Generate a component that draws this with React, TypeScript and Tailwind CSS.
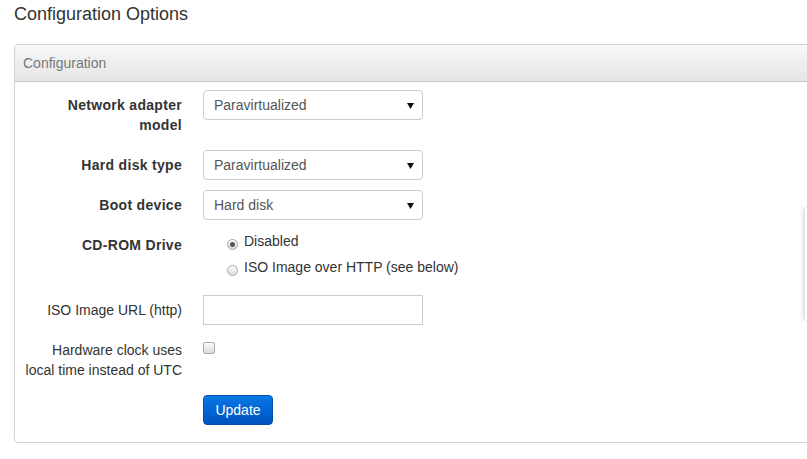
import React from "react";

const Arrow = () => (
  <svg width="7" height="6" viewBox="0 0 7 6" className="absolute right-[8px] top-[12px]">
    <polygon points="0,0 7,0 3.5,6" fill="#111" />
  </svg>
);

const Select = ({ value }: { value: string }) => (
  <div className="relative h-[30px] w-[220px] rounded-[4px] border border-[#cccccc] bg-white pl-[10px] text-[14px] leading-[28px] text-[#555]">
    {value}
    <Arrow />
  </div>
);

const Radio = ({ checked }: { checked?: boolean }) => (
  <span className="mt-[8px] flex h-[11px] w-[11px] shrink-0 items-center justify-center rounded-full border border-[#a8a8a8] bg-gradient-to-b from-[#fbfbfb] to-[#dcdcdc]">
    {checked && <span className="h-[5px] w-[5px] rounded-full bg-[#555]" />}
  </span>
);

const Row = ({
  label,
  bold,
  children,
  h,
}: {
  label?: React.ReactNode;
  bold?: boolean;
  children: React.ReactNode;
  h: string;
}) => (
  <div className={`flex items-start ${h}`}>
    <div
      className={`w-[167px] shrink-0 pt-[5px] text-right text-[14px] leading-[20px] text-[#333] ${
        bold ? "font-bold tracking-[0.3px]" : ""
      }`}
    >
      {label}
    </div>
    <div className="ml-[21px]">{children}</div>
  </div>
);

export default function App() {
  return (
    <div
      className="relative h-[459px] w-[807px] overflow-hidden bg-white"
      style={{ fontFamily: '"Liberation Sans", Arial, sans-serif' }}
    >
      <div className="pl-[14px] pt-[2px] text-[18px] leading-[24px] text-[#333]">Configuration Options</div>
      <div className="ml-[14px] mt-[18px] w-[820px] rounded-[4px] border border-[#d2d2d6]">
        <div className="h-[37px] rounded-t-[4px] border-b border-[#c4c4c8] bg-gradient-to-b from-[#f7f7f7] to-[#e6e6e8] pl-[8px] text-[14px] leading-[37px] text-[#777]">
          Configuration
        </div>
        <div className="pt-[8px] pb-[17px]">
          <Row label={<>Network adapter<br />model</>} bold h="h-[60px]">
            <Select value="Paravirtualized" />
          </Row>
          <Row label="Hard disk type" bold h="h-[40px]">
            <Select value="Paravirtualized" />
          </Row>
          <Row label="Boot device" bold h="h-[40px]">
            <Select value="Hard disk" />
          </Row>
          <Row label="CD-ROM Drive" bold h="h-[65px]">
            <div className="pl-[24px] pt-[1px] text-[14px] leading-[20px] text-[#333]">
              <div className="flex gap-[6px]">
                <Radio checked />
                <span>Disabled</span>
              </div>
              <div className="mt-[6px] flex gap-[6px]">
                <Radio />
                <span>ISO Image over HTTP (see below)</span>
              </div>
            </div>
          </Row>
          <Row label="ISO Image URL (http)" h="h-[40px]">
            <div className="h-[30px] w-[220px] border border-[#cccccc] bg-white" />
          </Row>
          <Row label={<>Hardware clock uses<br />local time instead of UTC</>} h="h-[60px]">
            <div className="mt-[7px] h-[12px] w-[12px] rounded-[2px] border border-[#a8a8a8] bg-gradient-to-b from-[#fbfbfb] to-[#dcdcdc]" />
          </Row>
          <div className="flex">
            <div className="w-[167px] shrink-0" />
            <button className="ml-[21px] h-[30px] w-[70px] rounded-[4px] border border-[#0050a8] bg-gradient-to-b from-[#0a78e6] to-[#0052c0] text-[14px] text-white">
              Update
            </button>
          </div>
        </div>
      </div>
      <div className="absolute left-[805px] top-[208px] h-[112px] w-[20px] bg-white shadow-[-2px_0_4px_rgba(0,0,0,0.15)]" />
    </div>
  );
}
